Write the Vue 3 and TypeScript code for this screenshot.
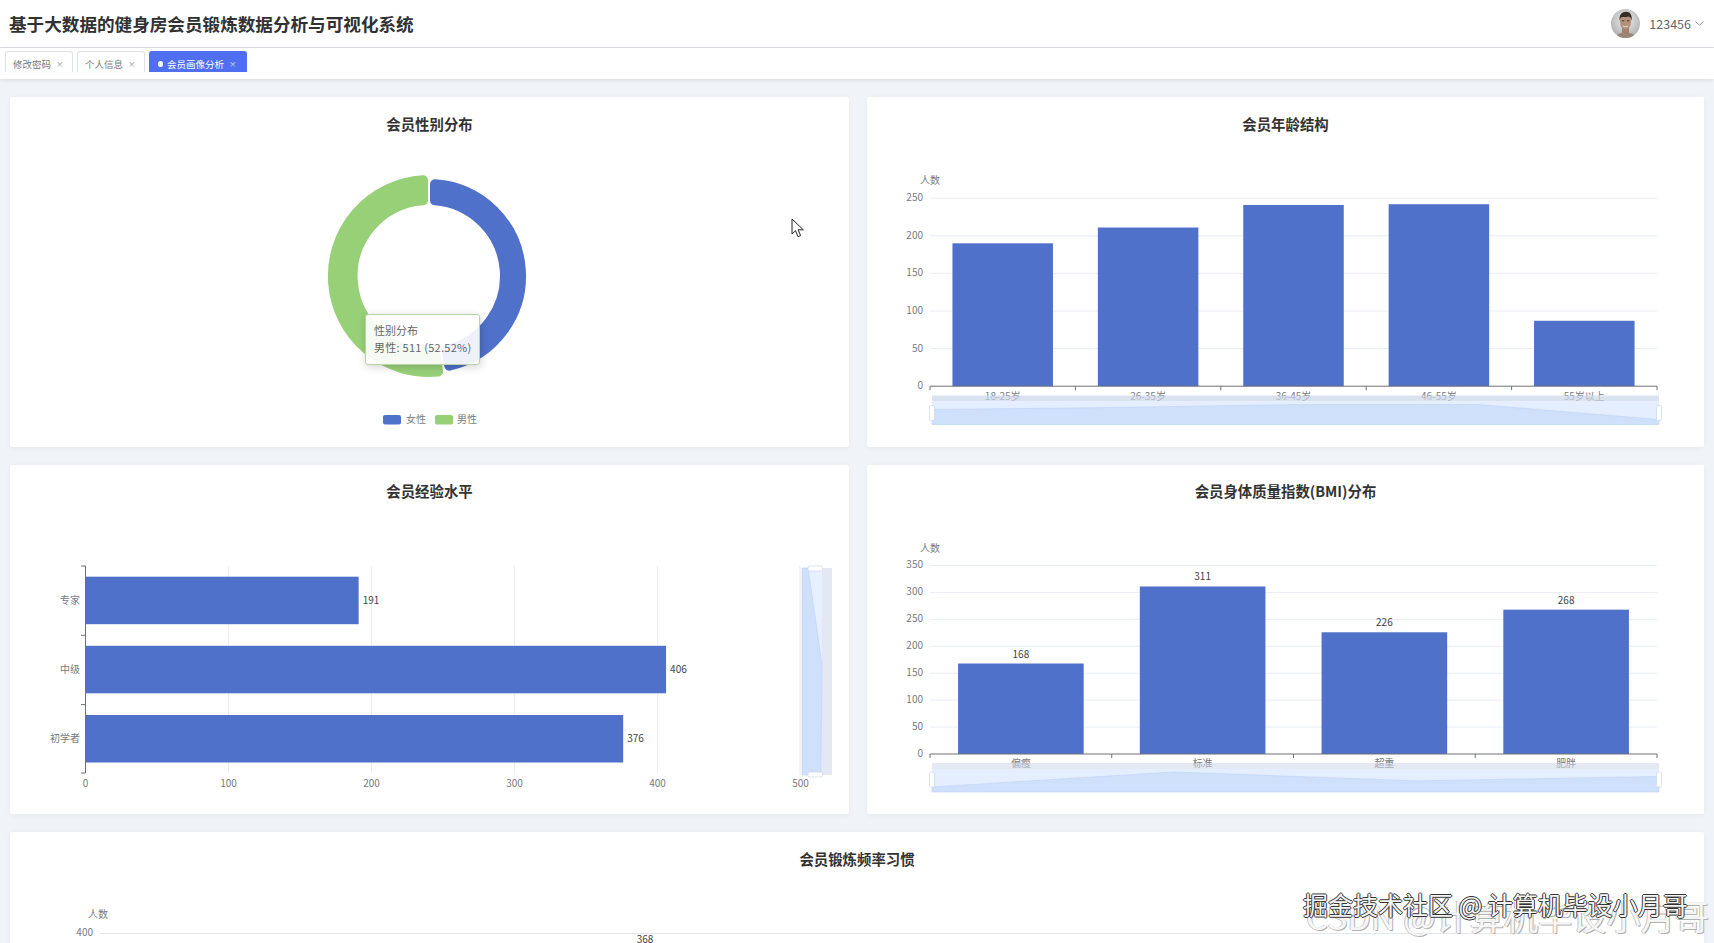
<script setup lang="ts">
interface BarChart {
  view: string
  title: string
  left: number
  right: number
  base: number
  unit: number
  step: number
  ticks: number
  name: string
  nameY: number
  cats: { label: string; value: number }[]
  barW: number
  zoomTop: number
  handleTop: number
}

const cardTitleRows = {
  gender: '会员性别分布',
  exp: '会员经验水平'
}

function pol(r: number, deg: number): string {
  const a = (deg * Math.PI) / 180
  return `${(429 + r * Math.sin(a)).toFixed(2)} ${(276 - r * Math.cos(a)).toFixed(2)}`
}

function sector(rIn: number, rOut: number, a0: number, a1: number): string {
  const inset = 6
  const dO = ((inset / rOut) * 180) / Math.PI
  const dI = ((inset / rIn) * 180) / Math.PI
  const large = a1 - a0 > 180 ? 1 : 0
  return `M${pol(rOut, a0 + dO)} A${rOut} ${rOut} 0 ${large} 1 ${pol(rOut, a1 - dO)} L${pol(rIn, a1 - dI)} A${rIn} ${rIn} 0 ${large} 0 ${pol(rIn, a0 + dI)} Z`
}

const bluePath = sector(76, 92, 0, 171)
const greenPath = sector(76, 96, 171, 360)

const barCharts: BarChart[] = [
  {
    view: '867 151 837 295',
    title: '会员年龄结构',
    left: 930,
    right: 1657,
    base: 386.2,
    unit: 0.752,
    step: 50,
    ticks: 5,
    name: '人数',
    nameY: 180.5,
    barW: 100.5,
    zoomTop: 395.5,
    handleTop: 405.5,
    cats: [
      { label: '18-25岁', value: 190 },
      { label: '26-35岁', value: 211 },
      { label: '36-45岁', value: 241 },
      { label: '46-55岁', value: 242 },
      { label: '55岁以上', value: 87 }
    ]
  },
  {
    view: '867 518 837 295',
    title: '会员身体质量指数(BMI)分布',
    left: 930,
    right: 1657,
    base: 753,
    unit: 0.5386,
    step: 50,
    ticks: 7,
    name: '人数',
    nameY: 547,
    barW: 125.6,
    zoomTop: 762,
    handleTop: 771,
    cats: [
      { label: '偏瘦', value: 168 },
      { label: '标准', value: 311 },
      { label: '超重', value: 226 },
      { label: '肥胖', value: 268 }
    ]
  }
]

function catW(c: BarChart): number {
  return (c.right - c.left) / c.cats.length
}
function range(n: number): number[] {
  return Array.from({ length: n }, (_, i) => i)
}
function shadowPoints(c: BarChart): string {
  const x0 = 932
  const x1 = 1659
  const top = c.zoomTop + 9
  const bottom = c.zoomTop + 29
  const vals = c.cats.map((d) => d.value)
  const max = Math.max(...vals)
  const min = Math.min(...vals)
  const pts = vals.map((v, i) => {
    const x = x0 + ((x1 - x0) * i) / (vals.length - 1)
    const y = top + ((max - v) / (max - min)) * (bottom - top - 5)
    return `${x.toFixed(1)},${y.toFixed(1)}`
  })
  return `${x0},${bottom} ${pts.join(' ')} ${x1},${bottom}`
}

const hScale = 1.43
const hBars = [
  { label: '专家', value: 191, y: 575.7, mid: 599 },
  { label: '中级', value: 406, y: 644.8, mid: 668 },
  { label: '初学者', value: 376, y: 714, mid: 737 }
]
const hTicks = [0, 100, 200, 300, 400, 500]
const tabs = [
  { label: '修改密码', active: false },
  { label: '个人信息', active: false },
  { label: '会员画像分析', active: true }
]
</script>

<template>
  <div class="app">
    <header class="top">
      <h1 class="sys">基于大数据的健身房会员锻炼数据分析与可视化系统</h1>
      <div class="user">
        <svg class="avatar" viewBox="0 0 29 29" aria-hidden="true">
          <defs>
            <clipPath id="av"><circle cx="14.5" cy="14.5" r="14.5" /></clipPath>
            <radialGradient id="avbg" cx="0.5" cy="0.4" r="0.7">
              <stop offset="0" stop-color="#efefef" />
              <stop offset="1" stop-color="#a5a5a5" />
            </radialGradient>
          </defs>
          <g clip-path="url(#av)">
            <rect width="29" height="29" fill="url(#avbg)" />
            <path d="M4 29c1-4 6-5.500 10.500-5.500S24 25 25 29z" fill="#9a8473" />
            <path d="M11 18h7v6c-2 1.500-5 1.500-7 0z" fill="#a2806c" />
            <ellipse cx="14.500" cy="12.800" rx="5.600" ry="7.800" fill="#b39279" />
            <path d="M8.500 12C8 5.500 11 2.800 15 2.800s6.500 3 5.600 9.200c-.5-2.500-1.300-4-3-4.400-2.500.6-5 .6-6.700.3-1.300.6-2 2.100-2.400 4.100z" fill="#352d27" />
            <path d="M11 11.800h2.300M16 11.800h2.300" stroke="#3d312a" stroke-width=".9" />
            <path d="M12 17c1.600.9 3.600.9 5 0" stroke="#f1e7df" stroke-width=".9" fill="none" />
          </g>
        </svg>
        <span class="uname">123456</span>
        <svg class="chev" viewBox="0 0 9 5" aria-hidden="true"><path d="M.5.500 4.500 4.300 8.500.500" fill="none" stroke="#888" stroke-width=".9" /></svg>
      </div>
    </header>

    <nav class="tabs">
      <div v-for="t in tabs" :key="t.label" class="tab" :class="{ on: t.active }">
        <i v-if="t.active" class="dot"></i>
        <span>{{ t.label }}</span>
        <b class="x">×</b>
      </div>
    </nav>

    <main class="board">
      <section class="card">
        <h2 class="ctitle">{{ cardTitleRows.gender }}</h2>
        <svg class="chart" viewBox="10 151 839 295" aria-hidden="true">
          <path :d="bluePath" fill="#4f71c9" stroke="#4f71c9" stroke-width="10" stroke-linejoin="round" />
          <path :d="greenPath" fill="#98d078" stroke="#98d078" stroke-width="10" stroke-linejoin="round" />
          <rect x="383" y="415" width="18" height="9.500" rx="2" fill="#4f71c9" />
          <text class="t10" x="406" y="423">女性</text>
          <rect x="435" y="415" width="18" height="9.500" rx="2" fill="#98d078" />
          <text class="t10" x="457" y="423">男性</text>
        </svg>
        <div class="tip">
          <div>性别分布</div>
          <div class="tip-v">男性: 511 (52.52%)</div>
        </div>
      </section>

      <section class="card">
        <h2 class="ctitle">{{ barCharts[0].title }}</h2>
        <svg class="chart" :viewBox="barCharts[0].view" aria-hidden="true">
          <g>
            <text class="t10 mid" :x="barCharts[0].left" :y="barCharts[0].nameY + 3.500">{{ barCharts[0].name }}</text>
            <g v-for="i in range(barCharts[0].ticks + 1)" :key="i">
              <line v-if="i > 0" :x1="barCharts[0].left" :x2="barCharts[0].right" :y1="barCharts[0].base - i * barCharts[0].step * barCharts[0].unit" :y2="barCharts[0].base - i * barCharts[0].step * barCharts[0].unit" stroke="#e9edf4" />
              <text class="t10 end" :x="barCharts[0].left - 7" :y="barCharts[0].base - i * barCharts[0].step * barCharts[0].unit + 3">{{ i * barCharts[0].step }}</text>
            </g>
            <g v-for="(d, i) in barCharts[0].cats" :key="d.label">
              <rect :x="barCharts[0].left + catW(barCharts[0]) * (i + 0.5) - barCharts[0].barW / 2" :y="barCharts[0].base - d.value * barCharts[0].unit" :width="barCharts[0].barW" :height="d.value * barCharts[0].unit" fill="#4f71c9" />
              <text class="t10 mid" :x="barCharts[0].left + catW(barCharts[0]) * (i + 0.5)" :y="barCharts[0].base + 14">{{ d.label }}</text>
            </g>
            <line :x1="barCharts[0].left" :x2="barCharts[0].right" :y1="barCharts[0].base" :y2="barCharts[0].base" stroke="#6e7079" />
            <line v-for="i in range(barCharts[0].cats.length + 1)" :key="'t' + i" :x1="barCharts[0].left + catW(barCharts[0]) * i" :x2="barCharts[0].left + catW(barCharts[0]) * i" :y1="barCharts[0].base" :y2="barCharts[0].base + 4" stroke="#6e7079" />
            <rect x="932" :y="barCharts[0].zoomTop" width="727" height="6" fill="#ccd5e8" opacity=".7" />
            <rect x="932" :y="barCharts[0].zoomTop + 6" width="727" height="23" fill="#e4eeff" />
            <polygon :points="shadowPoints(barCharts[0])" fill="#cfe0fa" stroke="#bcd2f5" stroke-width=".6" />
            <rect x="929.500" :y="barCharts[0].handleTop" width="5" height="15" rx="1.500" fill="#fff" stroke="#cdd6e6" stroke-width=".7" />
            <rect x="1656.500" :y="barCharts[0].handleTop" width="5" height="15" rx="1.500" fill="#fff" stroke="#cdd6e6" stroke-width=".7" />
          </g>
        </svg>
      </section>

      <section class="card">
        <h2 class="ctitle">{{ cardTitleRows.exp }}</h2>
        <svg class="chart" viewBox="10 518 839 295" aria-hidden="true">
          <g v-for="t in hTicks" :key="t">
            <line v-if="t > 0 && t < 500" :x1="85.500 + t * hScale" :x2="85.500 + t * hScale" y1="565" y2="772" stroke="#eaedf3" />
            <text class="t10 mid" :x="85.500 + t * hScale" y="786">{{ t }}</text>
          </g>
          <g v-for="b in hBars" :key="b.label">
            <rect x="85.500" :y="b.y" :width="b.value * hScale" height="47.500" fill="#4f71c9" />
            <text class="t10 end" x="80" :y="b.mid + 3.500">{{ b.label }}</text>
            <text class="t10 dark" :x="85.500 + b.value * hScale + 4" :y="b.mid + 3.500">{{ b.value }}</text>
          </g>
          <line x1="85.500" x2="85.500" y1="565" y2="772" stroke="#6e7079" />
          <line v-for="y in [565, 634.300, 703.600, 772]" :key="y" x1="81" x2="85.500" :y1="y" :y2="y" stroke="#6e7079" />
          <line x1="800" x2="800" y1="565" y2="774" stroke="#e8ebf1" />
          <rect x="802" y="567" width="30" height="207" fill="#e3e8f2" />
          <rect x="802" y="567" width="20" height="207" fill="#e6efff" />
          <polygon points="802,567 808,567 822,663 821,774 802,774" fill="#cfe0fa" stroke="#bcd2f5" stroke-width=".6" />
          <rect x="808" y="565" width="14.500" height="5" rx="1.500" fill="#fff" stroke="#cdd6e6" stroke-width=".7" />
          <rect x="808" y="771" width="14.500" height="5" rx="1.500" fill="#fff" stroke="#cdd6e6" stroke-width=".7" />
        </svg>
      </section>

      <section class="card">
        <h2 class="ctitle">{{ barCharts[1].title }}</h2>
        <svg class="chart" :viewBox="barCharts[1].view" aria-hidden="true">
          <g>
            <text class="t10 mid" :x="barCharts[1].left" :y="barCharts[1].nameY + 3.500">{{ barCharts[1].name }}</text>
            <g v-for="i in range(barCharts[1].ticks + 1)" :key="i">
              <line v-if="i > 0" :x1="barCharts[1].left" :x2="barCharts[1].right" :y1="barCharts[1].base - i * barCharts[1].step * barCharts[1].unit" :y2="barCharts[1].base - i * barCharts[1].step * barCharts[1].unit" stroke="#e9edf4" />
              <text class="t10 end" :x="barCharts[1].left - 7" :y="barCharts[1].base - i * barCharts[1].step * barCharts[1].unit + 3">{{ i * barCharts[1].step }}</text>
            </g>
            <g v-for="(d, i) in barCharts[1].cats" :key="d.label">
              <rect :x="barCharts[1].left + catW(barCharts[1]) * (i + 0.5) - barCharts[1].barW / 2" :y="barCharts[1].base - d.value * barCharts[1].unit" :width="barCharts[1].barW" :height="d.value * barCharts[1].unit" fill="#4f71c9" />
              <text class="t10 mid" :x="barCharts[1].left + catW(barCharts[1]) * (i + 0.5)" :y="barCharts[1].base + 13">{{ d.label }}</text>
              <text class="t10 mid dark" :x="barCharts[1].left + catW(barCharts[1]) * (i + 0.5)" :y="barCharts[1].base - d.value * barCharts[1].unit - 6">{{ d.value }}</text>
            </g>
            <line :x1="barCharts[1].left" :x2="barCharts[1].right" :y1="barCharts[1].base" :y2="barCharts[1].base" stroke="#6e7079" />
            <line v-for="i in range(barCharts[1].cats.length + 1)" :key="'t' + i" :x1="barCharts[1].left + catW(barCharts[1]) * i" :x2="barCharts[1].left + catW(barCharts[1]) * i" :y1="barCharts[1].base" :y2="barCharts[1].base + 4" stroke="#6e7079" />
            <rect x="932" :y="barCharts[1].zoomTop" width="727" height="6" fill="#ccd5e8" opacity=".55" />
            <rect x="932" :y="barCharts[1].zoomTop + 6" width="727" height="23" fill="#e4eeff" />
            <polygon :points="shadowPoints(barCharts[1])" fill="#cfe0fa" stroke="#bcd2f5" stroke-width=".6" />
            <rect x="929.500" :y="barCharts[1].handleTop" width="5" height="15" rx="1.500" fill="#fff" stroke="#cdd6e6" stroke-width=".7" />
            <rect x="1656.500" :y="barCharts[1].handleTop" width="5" height="15" rx="1.500" fill="#fff" stroke="#cdd6e6" stroke-width=".7" />
          </g>
        </svg>
      </section>

      <section class="card wide">
        <h2 class="ctitle">会员锻炼频率习惯</h2>
        <svg class="chart wide-chart" viewBox="10 885 1694 295" aria-hidden="true">
          <text class="t10 mid" x="98" y="917">人数</text>
          <text class="t10 end" x="93" y="935">400</text>
          <line x1="100" x2="1555" y1="932.500" y2="932.500" stroke="#e3e6ec" />
          <text class="t10 mid dark" x="645" y="942">368</text>
        </svg>
      </section>
    </main>

    <svg class="cursor" viewBox="0 0 13 20" aria-hidden="true">
      <path d="M1 1v15l3.500-3.300 2.500 6 2.600-1.100-2.500-5.800h5.200z" fill="#fff" stroke="#222" stroke-width="1" stroke-linejoin="round" />
    </svg>
    <div class="mark-back">CSDN @计算机毕设小月哥</div>
    <div class="mark-front">掘金技术社区 @ 计算机毕设小月哥</div>
  </div>
</template>

<style scoped>
.app {
  position: relative;
  width: 1714px;
  height: 943px;
  overflow: hidden;
  background: #f0f3f7;
  font-family: "Noto Sans CJK SC", "Noto Sans", sans-serif;
  color: #333;
}
.top {
  height: 47px;
  display: flex;
  align-items: center;
  justify-content: space-between;
  padding: 0 10px 0 9px;
  background: #fff;
  border-bottom: 1px solid #dcdfe4;
}
.sys {
  margin: 0;
  font-size: 17.600px;
  font-weight: 700;
  color: #303133;
}
.user {
  display: flex;
  align-items: center;
}
.avatar {
  width: 29px;
  height: 29px;
  margin-right: 9px;
}
.uname {
  font-size: 12.500px;
  color: #666;
}
.chev {
  width: 9px;
  height: 5px;
  margin-left: 4px;
}
.tabs {
  height: 31px;
  box-sizing: border-box;
  display: flex;
  gap: 4.500px;
  padding: 3px 0 7px 5px;
  background: #fff;
  box-shadow: 0 1px 4px rgba(0, 21, 41, 0.1);
  position: relative;
}
.tab {
  box-sizing: border-box;
  height: 21px;
  width: 67.500px;
  display: flex;
  align-items: center;
  padding: 4px 0 0 7px;
  border: 1px solid #dfe2e7;
  border-bottom: 0;
  border-radius: 3px 3px 0 0;
  font-size: 9.500px;
  color: #777;
}
.tab.on {
  width: 98px;
  padding-left: 7.500px;
  background: #4f6ef0;
  border-color: #4f6ef0;
  color: #fff;
}
.dot {
  width: 5.500px;
  height: 5.500px;
  border-radius: 50%;
  background: #fff;
  margin-right: 4px;
}
.x {
  margin-left: 5px;
  font-weight: 400;
  font-size: 7.500px;
  line-height: 1;
  opacity: 0.8;
}
.board {
  display: grid;
  grid-template-columns: 839px 837px;
  grid-auto-rows: 349.500px;
  gap: 18px;
  padding: 18px 10px 0;
}
.card {
  position: relative;
  background: #fff;
  border-radius: 2px;
  box-shadow: 0 1px 5px rgba(0, 0, 0, 0.05);
}
.wide {
  grid-column: 1 / 3;
}
.ctitle {
  margin: 0;
  height: 54px;
  box-sizing: border-box;
  padding-top: 15.500px;
  text-align: center;
  font-size: 14.400px;
  line-height: 22px;
  font-weight: 700;
  color: #333;
}
.chart {
  display: block;
  width: 100%;
  height: 295px;
}
.t10 {
  font-size: 10px;
  fill: #777a82;
}
.mid {
  text-anchor: middle;
}
.end {
  text-anchor: end;
}
.dark {
  fill: #444;
}
.tip {
  position: absolute;
  left: 355px;
  top: 217px;
  width: 115px;
  height: 51px;
  box-sizing: border-box;
  padding: 7px 8px;
  font-size: 11px;
  line-height: 17px;
  color: #666;
  white-space: nowrap;
  background: rgba(255, 255, 255, 0.9);
  border: 1px solid #b9d2aa;
  border-radius: 3px;
  box-shadow: 1px 2px 8px rgba(0, 0, 0, 0.18);
}
.tip-v {
  letter-spacing: 0.25px;
}
.cursor {
  position: absolute;
  left: 791px;
  top: 218px;
  width: 13px;
  height: 20px;
}
.mark-back {
  position: absolute;
  left: 1306px;
  top: 893px;
  font-size: 34.200px;
  line-height: 44px;
  white-space: nowrap;
  color: #f6f6f6;
  text-shadow: 1px 1px 0 #b0b0b0, -1px 0 0 #c4c4c4;
}
.mark-front {
  position: absolute;
  left: 1303px;
  top: 886px;
  font-size: 25px;
  line-height: 36px;
  white-space: nowrap;
  color: #f4f4f4;
  text-shadow: 1px 0 0 #333, -1px 0 0 #333, 0 1px 0 #333, 0 -1px 0 #333;
}
</style>

<style>
html,
body {
  margin: 0;
  overflow: hidden;
}
</style>
